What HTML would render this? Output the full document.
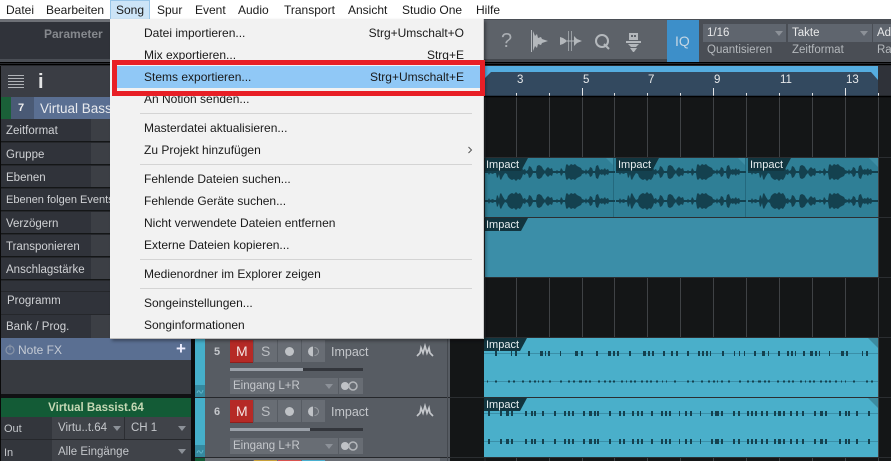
<!DOCTYPE html>
<html><head><meta charset="utf-8"><style>
html,body{margin:0;padding:0;background:#141617}
#p{position:relative;width:891px;height:461px;overflow:hidden;font-family:"Liberation Sans",sans-serif;background:#141617}
#p div{position:absolute;white-space:nowrap}
.m{font-size:12px;color:#1a1a1a;left:144px;line-height:16px;height:16px}
.b{font-size:12px;color:#1a1a1a;top:2px;line-height:16px}
.sep{left:140px;width:332px;height:1px;background:#d4d4d4}
.l{font-size:11.5px;color:#d0d2d5;left:6px;line-height:14px}
.r{left:1px;width:90px;height:22px;background:#30333a}
.v{left:91px;width:19px;height:22px;background:#3c3f45}
.h{left:1px;width:109px;height:1px;background:#25272b}
.g{font-size:12px;color:#c4c7cb;line-height:14px}
.ev{font-size:11px;color:#e8eef0;line-height:13px}
.rn{top:73px;font-size:11.5px;color:#e6e8ea;line-height:14px}
svg{position:absolute;left:0;top:0}
</style></head><body><div id="p">

<!-- top toolbar -->
<div style="left:0;top:19px;width:891px;height:44px;background:#4a4e55"></div>
<div style="left:0;top:19px;width:110px;height:3px;background:#6d7076"></div>
<div style="left:0;top:22px;width:110px;height:37px;background:#30333a"></div>
<div style="left:44px;top:27px;font-size:12px;font-weight:bold;color:#85888d;line-height:14px">Parameter</div>
<div style="left:484px;top:20px;width:183px;height:39px;background:#5d6269"></div>
<div style="left:484px;top:59px;width:183px;height:3px;background:#44484e"></div>
<div style="left:667px;top:20px;width:32px;height:42px;background:#3d8fc9"></div>
<div style="left:675px;top:34px;font-size:14px;color:#c4d6e4;line-height:15px">IQ</div>
<div style="left:703px;top:24px;width:83px;height:18px;background:#5f656e"></div>
<div style="left:788px;top:24px;width:84px;height:18px;background:#5f656e"></div>
<div style="left:873px;top:24px;width:18px;height:18px;background:#5f656e"></div>
<div style="left:707px;top:26px;font-size:11.5px;color:#e8e9ea;line-height:14px">1/16</div>
<div style="left:792px;top:26px;font-size:11.5px;color:#e8e9ea;line-height:14px">Takte</div>
<div style="left:877px;top:26px;font-size:11.5px;color:#e8e9ea;line-height:14px">Ad</div>
<div style="left:707px;top:43px;font-size:11.5px;color:#b4b8bc;line-height:14px">Quantisieren</div>
<div style="left:792px;top:43px;font-size:11.5px;color:#b4b8bc;line-height:14px">Zeitformat</div>
<div style="left:877px;top:43px;font-size:11.5px;color:#b4b8bc;line-height:14px">Ra</div>
<div style="left:501px;top:29px;font-size:20px;color:#a9adb2;line-height:24px">?</div>

<!-- black divider + left header -->
<div style="left:0;top:62px;width:891px;height:4px;background:#26282c"></div>
<div style="left:0;top:62px;width:891px;height:1px;background:#000"></div>
<div style="left:0;top:64px;width:891px;height:1px;background:#000"></div>
<div style="left:0;top:66px;width:110px;height:31px;background:#3a3d44"></div>
<div style="left:0;top:66px;width:1px;height:395px;background:#0a0a0a"></div>
<div style="left:8px;top:75px;width:16px;height:13px;background:repeating-linear-gradient(#b0b3b7 0 1px,#3a3d44 1px 3px)"></div>
<div style="left:38px;top:70px;font-size:20px;font-weight:bold;color:#e4e5e6;line-height:24px">i</div>

<div style="left:1px;top:97px;width:10px;height:22px;background:#1a6038"></div>
<div style="left:11px;top:97px;width:23px;height:22px;background:#4a5a75"></div>
<div style="left:34px;top:97px;width:76px;height:22px;background:#5a6f92"></div>
<div style="left:18px;top:101px;font-size:11px;font-weight:bold;color:#eee;line-height:14px">7</div>
<div style="left:40px;top:101px;font-size:13.5px;color:#e8eaee;line-height:15px;width:70px;overflow:hidden">Virtual Bassist</div>

<!-- parameter rows -->
<div class="r" style="top:119px"></div><div class="v" style="top:119px"></div>
<div class="r" style="top:142px"></div><div class="v" style="top:142px"></div>
<div class="r" style="top:165px"></div><div class="v" style="top:165px"></div>
<div class="r" style="top:188px;width:109px"></div>
<div class="r" style="top:211px"></div><div class="v" style="top:211px"></div>
<div class="r" style="top:234px"></div><div class="v" style="top:234px"></div>
<div class="r" style="top:257px"></div><div class="v" style="top:257px"></div>
<div class="r" style="top:280px;width:109px;height:11px"></div>
<div class="r" style="top:291px;width:109px;height:23px"></div>
<div class="r" style="top:314px;height:24px"></div><div class="v" style="top:314px;height:24px"></div>
<div class="h" style="top:142px"></div><div class="h" style="top:165px"></div><div class="h" style="top:188px"></div><div class="h" style="top:211px"></div><div class="h" style="top:234px"></div><div class="h" style="top:257px"></div><div class="h" style="top:280px"></div><div class="h" style="top:291px"></div><div class="h" style="top:314px"></div>
<div class="l" style="top:124px">Zeitformat</div>
<div class="l" style="top:148px">Gruppe</div>
<div class="l" style="top:171px">Ebenen</div>
<div class="l" style="top:193px;font-size:11px;width:104px;overflow:hidden">Ebenen folgen Events</div>
<div class="l" style="top:217px">Verzögern</div>
<div class="l" style="top:240px">Transponieren</div>
<div class="l" style="top:263px">Anschlagstärke</div>
<div class="l" style="top:294px;left:7px">Programm</div>
<div class="l" style="top:320px">Bank / Prog.</div>

<!-- lower left -->
<div style="left:1px;top:338px;width:190px;height:22px;background:#5a6f92"></div>
<div style="left:18px;top:343px;font-size:12px;color:#c4cad4;line-height:14px">Note FX</div>
<div style="left:176px;top:341px;font-size:17px;font-weight:bold;color:#eef;line-height:16px">+</div>
<div style="left:1px;top:360px;width:190px;height:34px;background:#373a40"></div>
<div style="left:1px;top:394px;width:190px;height:4px;background:#101113"></div>
<div style="left:1px;top:398px;width:190px;height:19px;background:#135b36"></div>
<div style="left:1px;top:401px;width:190px;text-align:center;font-size:11.5px;font-weight:bold;color:#c5d8b4;line-height:14px">Virtual Bassist.64</div>
<div style="left:1px;top:417px;width:51px;height:44px;background:#33363c"></div>
<div style="left:52px;top:417px;width:139px;height:44px;background:#404349"></div>
<div style="left:1px;top:439px;width:190px;height:1px;background:#26282c"></div>
<div style="left:124px;top:417px;width:1px;height:22px;background:#2c2e33"></div>
<div style="left:4px;top:422px;font-size:11px;color:#c4c7cb;line-height:14px">Out</div>
<div style="left:4px;top:446px;font-size:11px;color:#c4c7cb;line-height:14px">In</div>
<div style="left:58px;top:421px;font-size:11.5px;color:#c4c7cb;line-height:14px">Virtu..t.64</div>
<div style="left:131px;top:421px;font-size:11.5px;color:#c4c7cb;line-height:14px">CH 1</div>
<div style="left:58px;top:445px;font-size:11.5px;color:#c4c7cb;line-height:14px">Alle Eingänge</div>

<!-- track column -->
<div style="left:191px;top:330px;width:4px;height:131px;background:#0c0d0e"></div>
<div style="left:195px;top:337px;width:255px;height:124px;background:#575c63"></div>
<div style="left:195px;top:337px;width:10px;height:60px;background:#45afca"></div>
<div style="left:195px;top:398px;width:10px;height:59px;background:#45afca"></div>
<div style="left:195px;top:385px;width:10px;height:12px;background:#35899f"></div>
<div style="left:195px;top:445px;width:10px;height:12px;background:#35899f"></div>
<div style="left:195px;top:397px;width:255px;height:1px;background:#26282c"></div>
<div style="left:195px;top:457px;width:255px;height:1px;background:#26282c"></div>
<div style="left:447px;top:337px;width:1px;height:124px;background:#44484e"></div>
<div style="left:195px;top:458px;width:10px;height:3px;background:#135b36"></div>
<div style="left:205px;top:458px;width:235px;height:3px;background:#6a6e75"></div>
<div style="left:230px;top:460px;width:23px;height:1px;background:#555"></div>
<div style="left:254px;top:460px;width:23px;height:1px;background:#c9a13a"></div>
<div style="left:278px;top:460px;width:23px;height:1px;background:#d9534f"></div>
<div style="left:302px;top:460px;width:23px;height:1px;background:#4ab0d0"></div>

<div class="g" style="left:214px;top:345px;font-weight:bold;font-size:11px">5</div>
<div class="g" style="left:214px;top:405px;font-weight:bold;font-size:11px">6</div>
<div style="left:230px;top:340px;width:23px;height:22px;background:#b52a26;border-bottom:1px solid #8f1f1c"></div>
<div style="left:230px;top:400px;width:23px;height:22px;background:#b52a26;border-bottom:1px solid #8f1f1c"></div>
<div style="left:236px;top:344px;font-size:14px;color:#f2e6e4;line-height:15px">M</div>
<div style="left:236px;top:404px;font-size:14px;color:#f2e6e4;line-height:15px">M</div>
<div style="left:254px;top:340px;width:23px;height:22px;background:#686d74"></div>
<div style="left:278px;top:340px;width:23px;height:22px;background:#686d74"></div>
<div style="left:302px;top:340px;width:23px;height:22px;background:#686d74"></div>
<div style="left:254px;top:400px;width:23px;height:22px;background:#686d74"></div>
<div style="left:278px;top:400px;width:23px;height:22px;background:#686d74"></div>
<div style="left:302px;top:400px;width:23px;height:22px;background:#686d74"></div>
<div style="left:261px;top:344px;font-size:14px;color:#bcbfc3;line-height:15px">S</div>
<div style="left:261px;top:404px;font-size:14px;color:#bcbfc3;line-height:15px">S</div>
<div class="g" style="left:331px;top:345px;font-size:12.5px">Impact</div>
<div class="g" style="left:331px;top:405px;font-size:12.5px">Impact</div>
<div style="left:230px;top:368px;width:133px;height:3px;background:#33363c"></div>
<div style="left:230px;top:368px;width:73px;height:3px;background:#9aa0a8"></div>
<div style="left:230px;top:428px;width:133px;height:3px;background:#33363c"></div>
<div style="left:230px;top:428px;width:80px;height:3px;background:#9aa0a8"></div>
<div style="left:230px;top:378px;width:108px;height:16px;background:#686d74"></div>
<div style="left:339px;top:378px;width:24px;height:16px;background:#686d74"></div>
<div style="left:230px;top:438px;width:108px;height:16px;background:#686d74"></div>
<div style="left:339px;top:438px;width:24px;height:16px;background:#686d74"></div>
<div class="g" style="left:233px;top:379px;font-size:11.5px">Eingang L+R</div>
<div class="g" style="left:233px;top:439px;font-size:11.5px">Eingang L+R</div>

<!-- ruler -->
<div style="left:485px;top:66px;width:406px;height:30px;background:#2f3239"></div>
<div style="left:485px;top:72px;width:393px;height:24px;background:#33495f"></div>
<div style="left:485px;top:66px;width:393px;height:6px;background:#55ade0"></div>
<div class="rn" style="left:517px">3</div>
<div class="rn" style="left:583px">5</div>
<div class="rn" style="left:648px">7</div>
<div class="rn" style="left:714px">9</div>
<div class="rn" style="left:780px">11</div>
<div class="rn" style="left:846px">13</div>

<!-- arrangement graphics -->
<svg width="891" height="461" viewBox="0 0 891 461">
<defs>
<path id="wt" d="M0 0L0-1 3-1 4-3 5-1 8-2 9-1 11-1 12-6 13-5 14-2 15-7 16-8 17-6 18-4 20-1 22-2 23-5 25-7 27-8 29-7 31-9 33-7 35-8 37-5 38-2 40-3 41-1 43-2 44-6 46-5 47-3 48-1 51-1 52-6 54-7 56-6 57-5 58-3 60-1 61-3 63-5 65-3 67-4 68-1 71-1 72-2 73-1 75-1 76-4 77-3 78-1 80-1 81-7 82-8 84-6 86-8 88-7 90-8 92-6 94-5 96-4 97-2 100-1 101-3 102-1 104-2 105-5 107-4 108-1 110-1 111-6 113-7 114-4 115-2 117-3 118-2 120-4 121-2 123-3 124-1 130-1 130 0Z"/>
<g id="w"><use href="#wt"/><use href="#wt" transform="scale(1,-1)"/></g>
<polygon id="lab" points="0,0 43,0 36,13 0,13"/>
</defs>

<!-- grid -->
<g stroke="#3f4245" stroke-width="1">
<path d="M516.5 96V461M549.5 96V461M582.5 96V461M614.5 96V461M647.5 96V461M680.5 96V461M713.5 96V461M746.5 96V461M779.5 96V461M812.5 96V461M845.5 96V461M878.5 96V461"/>
<path d="M450 157.5H891M450 217.5H891M450 277.5H891M450 337.5H891M450 397.5H891M450 457.5H891" stroke="#2b2e31"/>
</g>
<path d="M485 96V461" stroke="#2b2e31"/>

<!-- ruler ticks -->
<path d="M516.5 93V96M549.5 93V96M582.5 88V96M614.5 93V96M647.5 93V96M680.5 93V96M713.5 88V96M746.5 93V96M779.5 93V96M812.5 93V96M845.5 88V96M878.5 93V96" stroke="#e6e8ea"/>
<polygon points="485,72 491,72 485,78" fill="#55ade0"/>
<polygon points="878,72 871,72 878,80" fill="#55ade0"/>
<path d="M484 96.5H891" stroke="#000" stroke-width="1.5"/>

<!-- events -->
<rect x="485" y="158" width="393" height="59" fill="#2f7f96"/>
<rect x="485" y="218" width="393" height="59" fill="#3b8ea8"/>
<rect x="484" y="338" width="394" height="59" fill="#4aafca"/>
<rect x="484" y="398" width="394" height="59" fill="#4aafca"/>
<path d="M613.5 158V217M745.5 158V217" stroke="#24697e"/>
<g fill="#14414f">
<use href="#w" x="485" y="172"/><use href="#w" x="485" y="201"/>
<use href="#w" x="616" y="172"/><use href="#w" x="616" y="201"/>
<use href="#w" x="748" y="172"/><use href="#w" x="748" y="201"/>
</g>
<g fill="#12353f">
<use href="#lab" x="485" y="158"/><use href="#lab" x="616" y="158"/><use href="#lab" x="748" y="158"/>
<use href="#lab" x="485" y="218"/>
<use href="#lab" x="484" y="338"/><use href="#lab" x="484" y="398"/>
</g>
<g fill="#3c8a9f">
<polygon points="868,338 878,338 878,348"/><polygon points="868,398 878,398 878,408"/>
</g>
<polygon points="606,158 613,158 613,165" fill="#3d8ea5"/><polygon points="738,158 745,158 745,165" fill="#3d8ea5"/><polygon points="869,158 878,158 878,167" fill="#3d8ea5"/>

<!-- midi lanes -->
<path d="M484 353.5H878M484 381.5H878M484 413.5H878M484 441.5H878" stroke="#3a8fa8"/>
<g fill="none" stroke="#14414f">
<path d="M495 353.5H872" stroke-width="5" stroke-dasharray="2 14 1 3 2 11 2 10 3 2 1 2 2 10 1 14 3 3 2 13 2 10 3 2 2 2 2 10 2 12 3 2 2 2 2 9 2 6 2 3 2 9 2 9 2 2 2 2 2 2 1 11 2 10 1 4 1 4 1 9 2 6 3 3 1 9 2 7 2 2 2 2 1 7 2 5 3 2 2 2 1 9 1 11 3 2"/>
<path d="M487 381.5H875" stroke-width="2" stroke-dasharray="1 7 2 11 2 3 2 7 2 5 2 3 2 2 1 3 2 5 2 9 2 6 2 3 2 4 3 3 2 2 2 7 2 4 2 3 2 2 2 6 2 3 1 3 2 2 2 5 2 3 2 2 2 4 2 4 1 3"/>
<path d="M488 413.5H872" stroke-width="5" stroke-dasharray="2 10 2 4 3 2 2 12 2 4 2 1 2 6 2 10 2 8 2 2 2 2 2 9 2 4 3 2 2 1 2 10 2 8 2 2 2 7 2 3 2 2 2 8 2 8 2 2 2 2 2 8 1 5 2 3 2 8 1 10 2 2 4 2 2 10 2 3 2 7 2 2 2 2 2 4 2 3 2 6 2 2 3 2 2 5 2 4 2 4"/>
<path d="M488 441.5H872" stroke-width="5" stroke-dasharray="2 10 2 4 3 2 2 12 2 4 2 1 2 6 2 10 2 8 2 2 2 2 2 9 2 4 3 2 2 1 2 10 2 8 2 2 2 7 2 3 2 2 2 8 2 8 2 2 2 2 2 8 1 5 2 3 2 8 1 10 2 2 4 2 2 10 2 3 2 7 2 2 2 2 2 4 2 3 2 6 2 2 3 2 2 5 2 4 2 4"/>
</g>

<!-- toolbar icons -->
<g fill="#b4b8bc" stroke="none">
<rect x="531" y="30" width="1" height="22"/><path d="M533 31l2 5 2-2 1 4 3-1 1 2 6 2-6 2-1 2-3-1-1 4-2-2-2 5z"/>
<path d="M560 37l3 1 3 2v2l-3 2-3 1zM574 36l3 3 5 2-5 2-3 3z"/>
<path d="M568 31h1v20h-1zM571 31h1v20h-1z" opacity=".7"/><rect x="565" y="40.500" width="9" height="1"/>
<path d="M629 33h9v7h-9zM626 41h15v2h-15zM628 44h11l-3 3h-5zM630 48h7l-3 4h-1z"/>
</g>
<circle cx="602" cy="41" r="6" fill="none" stroke="#b4b8bc" stroke-width="2"/><path d="M604 44l5 5" stroke="#b4b8bc" stroke-width="2"/>
<rect x="631" y="35" width="2" height="2" fill="#5d6269"/><rect x="634" y="35" width="2" height="2" fill="#5d6269"/>
<g fill="#8c9198">
<polygon points="775,31 783,31 779,36"/><polygon points="860,31 868,31 864,36"/>
<polygon points="113,426 121,426 117,431"/><polygon points="178,426 186,426 182,431"/><polygon points="178,449 186,449 182,454"/>
<polygon points="325,384 333,384 329,389"/><polygon points="325,444 333,444 329,449"/>
</g>

<!-- track buttons icons -->
<g fill="#bfc2c6">
<circle cx="289.500" cy="351.500" r="4.500"/><circle cx="289.500" cy="411.500" r="4.500"/>
<circle cx="345" cy="386" r="4"/><circle cx="345" cy="446" r="4"/>
<path d="M313 346.500a5 5 0 0 0 0 10zM313 406.500a5 5 0 0 0 0 10z"/>
</g>
<circle cx="353" cy="386" r="4" fill="#686d74" stroke="#b4b7bb" stroke-width="1.500"/>
<circle cx="353" cy="446" r="4" fill="#686d74" stroke="#b4b7bb" stroke-width="1.500"/>
<path d="M314.500 347.500a4 4 0 0 1 0 8M314.500 407.500a4 4 0 0 1 0 8" fill="none" stroke="#999da2"/>
<g fill="none" stroke="#c4c7cb" stroke-width="1.700">
<path d="M417 356l3-3 1-5 2 5 2-7 2 7 2-5 1 5 3 3"/><path d="M417 416l3-3 1-5 2 5 2-7 2 7 2-5 1 5 3 3"/>
</g>
<path d="M197 393q1.500-4 3-1t3-2M197 453q1.500-4 3-1t3-2" fill="none" stroke="#5fb4c9"/>
<circle cx="10" cy="350" r="4" fill="none" stroke="#8995a8" stroke-width="1.200"/><path d="M10 344.500V350" stroke="#8995a8"/>
</svg>

<!-- event labels -->
<div class="ev" style="left:486px;top:159px">Impact</div>
<div class="ev" style="left:618px;top:159px">Impact</div>
<div class="ev" style="left:750px;top:159px">Impact</div>
<div class="ev" style="left:486px;top:219px">Impact</div>
<div class="ev" style="left:486px;top:339px">Impact</div>
<div class="ev" style="left:486px;top:399px">Impact</div>

<!-- menu bar -->
<div style="left:0;top:0;width:891px;height:19px;background:#fff"></div>
<div style="left:110px;top:0;width:38px;height:18px;background:#cce4f7;border:1px solid #9ac6e8;border-bottom:none"></div>
<div class="b" style="left:6px">Datei</div>
<div class="b" style="left:46px">Bearbeiten</div>
<div class="b" style="left:116px">Song</div>
<div class="b" style="left:157px">Spur</div>
<div class="b" style="left:195px">Event</div>
<div class="b" style="left:238px">Audio</div>
<div class="b" style="left:284px">Transport</div>
<div class="b" style="left:348px">Ansicht</div>
<div class="b" style="left:402px">Studio One</div>
<div class="b" style="left:476px">Hilfe</div>

<!-- dropdown -->
<div style="left:110px;top:19px;width:373px;height:319px;background:#f2f2f2;border-right:1px solid #cfcfcf;border-bottom:1px solid #bdbdbd;box-shadow:2px 2px 3px rgba(0,0,0,.35)"></div>
<div class="m" style="top:25px">Datei importieren...</div>
<div class="m" style="top:47px">Mix exportieren...</div>
<div class="m" style="top:91px">An Notion senden...</div>
<div class="sep" style="top:113px"></div>
<div class="m" style="top:120px">Masterdatei aktualisieren...</div>
<div class="m" style="top:142px">Zu Projekt hinzufügen</div>
<div class="sep" style="top:164px"></div>
<div class="m" style="top:171px">Fehlende Dateien suchen...</div>
<div class="m" style="top:193px">Fehlende Geräte suchen...</div>
<div class="m" style="top:215px">Nicht verwendete Dateien entfernen</div>
<div class="m" style="top:237px">Externe Dateien kopieren...</div>
<div class="sep" style="top:259px"></div>
<div class="m" style="top:266px">Medienordner im Explorer zeigen</div>
<div class="sep" style="top:288px"></div>
<div class="m" style="top:295px">Songeinstellungen...</div>
<div class="m" style="top:317px">Songinformationen</div>
<div class="m" style="top:25px;left:auto;right:427px">Strg+Umschalt+O</div>
<div class="m" style="top:47px;left:auto;right:427px">Strg+E</div>
<svg width="891" height="461" viewBox="0 0 891 461"><path d="M468.500 147l3 3-3 3" fill="none" stroke="#555"/></svg>

<!-- highlight + red box -->
<div style="left:112px;top:60px;width:373px;height:36px;box-sizing:border-box;border:5px solid #e81f26;background:#f2f2f2"></div>
<div style="left:117px;top:66px;width:363px;height:22px;background:#90c8f6"></div>
<div class="m" style="top:69px">Stems exportieren...</div>
<div class="m" style="top:69px;left:auto;right:427px">Strg+Umschalt+E</div>
</div></body></html>
